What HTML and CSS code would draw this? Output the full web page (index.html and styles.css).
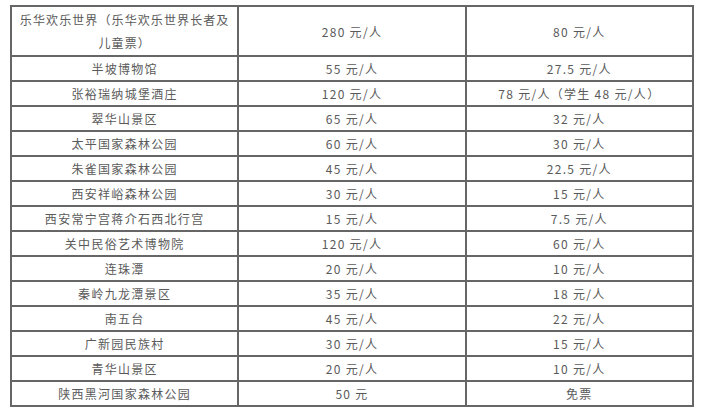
FILE: index.html
```html
<!DOCTYPE html>
<html lang="zh">
<head>
<meta charset="utf-8">
<link rel="stylesheet" href="styles.css">
</head>
<body>
<div class="page">
<table class="prices">
<colgroup><col class="c1"><col class="c2"><col class="c3"></colgroup>
<tr class="head"><td><div class="stack"><span>乐华欢乐世界（乐华欢乐世界长者及</span><span>儿童票）</span></div></td><td>280 元/人</td><td>80 元/人</td></tr>
<tr><td>半坡博物馆</td><td>55 元/人</td><td>27.5 元/人</td></tr>
<tr><td>张裕瑞纳城堡酒庄</td><td>120 元/人</td><td>78 元/人（学生 48 元/人）</td></tr>
<tr><td>翠华山景区</td><td>65 元/人</td><td>32 元/人</td></tr>
<tr><td>太平国家森林公园</td><td>60 元/人</td><td>30 元/人</td></tr>
<tr><td>朱雀国家森林公园</td><td>45 元/人</td><td>22.5 元/人</td></tr>
<tr><td>西安祥峪森林公园</td><td>30 元/人</td><td>15 元/人</td></tr>
<tr><td>西安常宁宫蒋介石西北行宫</td><td>15 元/人</td><td>7.5 元/人</td></tr>
<tr><td>关中民俗艺术博物院</td><td>120 元/人</td><td>60 元/人</td></tr>
<tr><td>连珠潭</td><td>20 元/人</td><td>10 元/人</td></tr>
<tr><td>秦岭九龙潭景区</td><td>35 元/人</td><td>18 元/人</td></tr>
<tr><td>南五台</td><td>45 元/人</td><td>22 元/人</td></tr>
<tr><td>广新园民族村</td><td>30 元/人</td><td>15 元/人</td></tr>
<tr><td>青华山景区</td><td>20 元/人</td><td>10 元/人</td></tr>
<tr><td>陕西黑河国家森林公园</td><td>50 元</td><td>免票</td></tr>
</table>
</div>
</body>
</html>
```

FILE: styles.css
```css
html, body {
  margin: 0;
  padding: 0;
  background: #ffffff;
}
.page {
  padding: 5px 0 0 10px;
}
.prices {
  border-collapse: collapse;
  table-layout: fixed;
  width: 684px;
  font-family: "Noto Sans CJK SC", "Liberation Sans", sans-serif;
  font-size: 12px;
  color: #5a5a5a;
  letter-spacing: 1.3px;
}
.prices td {
  border: 2px solid #666666;
  text-align: center;
  vertical-align: middle;
  height: 23px;
  padding: 0;
  line-height: 23px;
  white-space: nowrap;
}
.prices .head td {
  height: 48px;
  line-height: 23px;
}
.stack {
  display: grid;
  justify-items: center;
  letter-spacing: 1.1px;
}
```
